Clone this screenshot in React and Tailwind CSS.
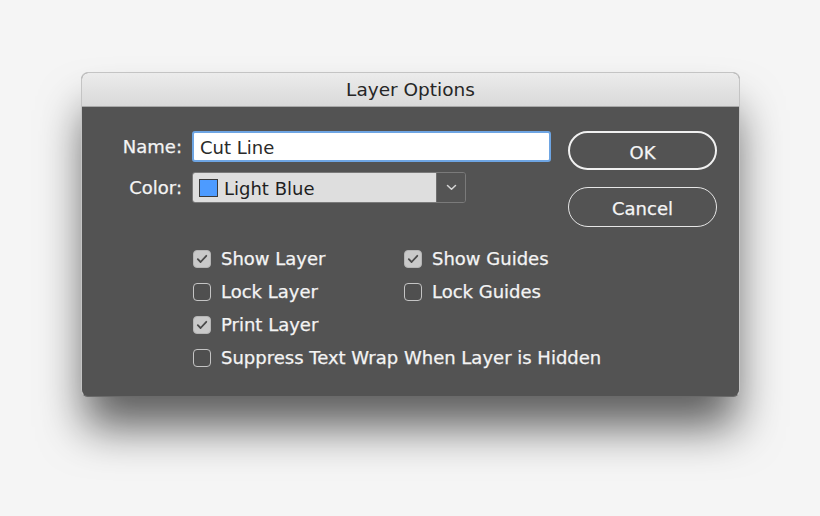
import React from "react";

const font = { fontFamily: '"DejaVu Sans", "Liberation Sans", sans-serif' };

function Check({ checked }) {
  return checked ? (
    <div className="w-[18px] h-[18px] rounded-[4px] bg-[#c9c9c9] border border-[#b5b5b5] flex items-center justify-center shrink-0">
      <svg width="12" height="10" viewBox="0 0 12 10" fill="none">
        <path d="M1.8 5.2 L4.6 8 L10.3 1.8" stroke="#4a4a4a" strokeWidth="1.8" strokeLinecap="round" strokeLinejoin="round" />
      </svg>
    </div>
  ) : (
    <div className="w-[18px] h-[18px] rounded-[4px] border-[1.5px] border-[#c4c4c4] bg-[#4f4f4f] shrink-0" />
  );
}

function Opt({ checked, label }) {
  return (
    <div className="h-[33px] flex items-center gap-[10px]">
      <Check checked={checked} />
      <span className="text-[18px] text-[#f4f4f4] whitespace-nowrap [-webkit-text-stroke:0.25px_#f4f4f4]">{label}</span>
    </div>
  );
}

export default function App() {
  return (
    <div className="w-[820px] h-[516px] bg-[#f5f5f5] pt-[72px] pl-[81px]" style={font}>
      <div className="w-[659px] rounded-[7px] overflow-hidden bg-[#535353] shadow-[0_34px_45px_-4px_rgba(0,0,0,0.62)] border border-[#c4c4c4] border-b-[#6a6a6a]">
        <div className="h-[34px] bg-gradient-to-b from-[#ececec] to-[#d9d9d9] border-b border-[#a8a8a8] flex items-center justify-center text-[18.5px] text-[#262626]">
          Layer Options
        </div>
        <div className="pt-[24px] pl-[39px] pb-[22px]">
          <div className="flex">
            <div className="flex flex-col">
              <div className="flex items-center h-[31px]">
                <div className="w-[61px] text-right text-[18px] text-[#f4f4f4] [-webkit-text-stroke:0.25px_#f4f4f4]">Name:</div>
                <div className="ml-[10px] w-[359px] h-[31px] bg-white rounded-[3px] border-2 border-[#6ea5e3] flex items-center pl-[6px] pt-[2px] text-[18px] text-[#2a2a2a]">
                  Cut Line
                </div>
              </div>
              <div className="flex items-center h-[31px] mt-[10px]">
                <div className="w-[61px] text-right text-[18px] text-[#f4f4f4] [-webkit-text-stroke:0.25px_#f4f4f4]">Color:</div>
                <div className="ml-[10px] w-[274px] h-[31px] flex rounded-[3px] border border-[#7a7a7a] overflow-hidden">
                  <div className="flex-1 bg-[#dedede] flex items-center pl-[6px] gap-[6px]">
                    <div className="w-[19px] h-[18px] bg-[#4d9bff] border border-[#3a3a3a]" />
                    <span className="text-[18px] text-[#1f1f1f] pt-[1px]">Light Blue</span>
                  </div>
                  <div className="w-[29px] bg-[#545454] border-l border-[#6e6e6e] flex items-center justify-center">
                    <svg width="11" height="7" viewBox="0 0 11 7" fill="none">
                      <path d="M1.5 1.5 L5.5 5.3 L9.5 1.5" stroke="#d6d6d6" strokeWidth="1.5" strokeLinecap="round" strokeLinejoin="round" />
                    </svg>
                  </div>
                </div>
              </div>
            </div>
            <div className="ml-[17px] flex flex-col gap-[17px]">
              <div className="w-[149px] h-[39px] rounded-full border-2 border-[#f0f0f0] flex items-center justify-center pt-[3px] text-[18px] text-[#f5f5f5] [-webkit-text-stroke:0.25px_#f5f5f5]">
                OK
              </div>
              <div className="w-[149px] h-[40px] rounded-full border-[1.5px] border-[#e6e6e6] flex items-center justify-center pt-[2px] text-[18px] text-[#f5f5f5] [-webkit-text-stroke:0.25px_#f5f5f5]">
                Cancel
              </div>
            </div>
          </div>
          <div className="mt-[15px] ml-[72px] grid grid-cols-[211px_auto]">
            <Opt checked label="Show Layer" />
            <Opt checked label="Show Guides" />
            <Opt checked={false} label="Lock Layer" />
            <Opt checked={false} label="Lock Guides" />
            <Opt checked label="Print Layer" />
            <div />
            <div className="col-span-2">
              <Opt checked={false} label="Suppress Text Wrap When Layer is Hidden" />
            </div>
          </div>
        </div>
      </div>
    </div>
  );
}
